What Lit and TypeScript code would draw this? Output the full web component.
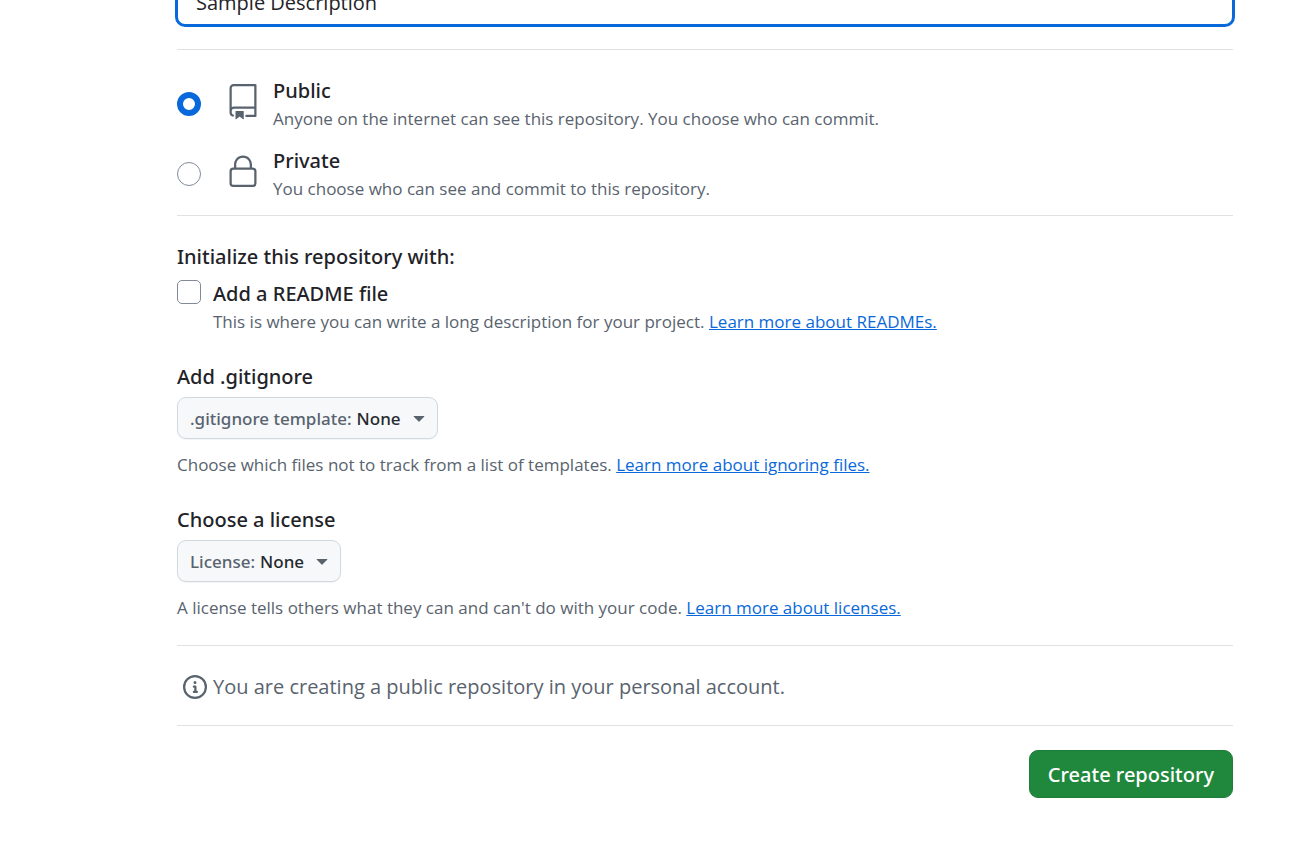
import { LitElement, html, css, svg } from "lit";
import { customElement, state } from "lit/decorators.js";

const repoIcon = svg`<path d="M3 2.75A2.75 2.75 0 0 1 5.75 0h14.5a.75.75 0 0 1 .75.75v20.5a.75.75 0 0 1-.75.75h-6a.75.75 0 0 1 0-1.5h5.25v-4H6A1.5 1.5 0 0 0 4.5 18v.75c0 .716.43 1.334 1.05 1.605a.75.75 0 0 1-.6 1.374A3.251 3.251 0 0 1 3 18.75ZM19.5 1.5H5.75c-.69 0-1.25.56-1.25 1.25v12.651A2.989 2.989 0 0 1 6 15h13.5Z"/><path d="M7 18.25a.25.25 0 0 1 .25-.25h5a.25.25 0 0 1 .25.25v5.01a.25.25 0 0 1-.397.201l-2.206-1.604a.25.25 0 0 0-.294 0L7.397 23.46a.25.25 0 0 1-.397-.2Z"/>`;
const lockIcon = svg`<path d="M6 9V7.25C6 3.845 8.503 1 12 1s6 2.845 6 6.25V9h.5a2.5 2.5 0 0 1 2.5 2.5v8a2.5 2.5 0 0 1-2.5 2.5h-13A2.5 2.5 0 0 1 3 19.5v-8A2.5 2.5 0 0 1 5.5 9Zm-1.5 2.5v8a1 1 0 0 0 1 1h13a1 1 0 0 0 1-1v-8a1 1 0 0 0-1-1h-13a1 1 0 0 0-1 1Zm3-4.25V9h9V7.25c0-2.67-1.922-4.75-4.5-4.75-2.578 0-4.5 2.08-4.5 4.75Z"/>`;
const infoIcon = svg`<path d="M0 8a8 8 0 1 1 16 0A8 8 0 0 1 0 8Zm8-6.5a6.5 6.5 0 1 0 0 13 6.5 6.5 0 0 0 0-13ZM6.5 7.75A.75.75 0 0 1 7.25 7h1a.75.75 0 0 1 .75.75v2.75h.25a.75.75 0 0 1 0 1.5h-2a.75.75 0 0 1 0-1.5h.25v-2h-.25a.75.75 0 0 1-.75-.75ZM8 6a1 1 0 1 1 0-2 1 1 0 0 1 0 2Z"/>`;

const visibilities = [
  { id: "public", title: "Public", icon: repoIcon, note: "Anyone on the internet can see this repository. You choose who can commit." },
  { id: "private", title: "Private", icon: lockIcon, note: "You choose who can see and commit to this repository." },
];

@customElement("app-root")
export class AppRoot extends LitElement {
  @state() private visibility = "public";

  static styles = css`
    :host {
      display: block;
      min-height: 100vh;
      overflow: hidden;
      box-sizing: border-box;
      background: #fff;
      color: #1f2328;
      font: 400 20px/28px "Open Sans", "Noto Sans", sans-serif;
    }
    *, *::before { box-sizing: border-box; }
    .form { margin: -21px 76px 0 177px; padding-bottom: 48px; }
    .description { display: flex; margin: 0 -2px 22px; }
    .description input {
      flex: 1;
      min-width: 0;
      height: 48px;
      padding: 0 18px 2px;
      border: 3px solid #0969da;
      border-radius: 10px;
      outline: none;
      background: #fff;
      color: inherit;
      font: inherit;
    }
    .visibility {
      display: grid;
      gap: 14px;
      margin: 0;
      padding: 27px 0 12px;
      border: solid #dfe2e5;
      border-width: 1px 0;
    }
    .choice { display: flex; align-items: flex-start; }
    .radio, .check {
      appearance: none;
      flex: none;
      width: 24px;
      height: 24px;
      margin: 0;
      border: 1px solid #818b98;
      background: #fff;
    }
    .radio { margin-top: 15px; border-radius: 50%; }
    .radio:checked { border: 6px solid #0969da; }
    .check { border-radius: 5px; }
    .check:checked { background: #0969da; border-color: #0969da; }
    .icon { flex: none; fill: #59636e; }
    .icon.large { width: 36px; height: 36px; margin: 7px 12px 0 24px; }
    .icon.small { width: 24px; height: 24px; }
    .copy { min-width: 0; }
    .title { display: block; margin: 0; font: 500 20px/28px "Noto Sans", "Open Sans", sans-serif; }
    .note { margin: 0; color: #59636e; font-size: 17px; line-height: 28px; }
    .note a { color: #0969da; text-decoration: underline; }
    .section { margin-top: 27px; }
    .readme { display: flex; gap: 12px; margin-top: 9px; }
    .picker {
      position: relative;
      display: inline-flex;
      align-items: center;
      height: 42px;
      margin: 6px 0 12px;
      padding: 2px 12px 0;
      border: 1px solid #d1d9e0;
      border-radius: 9px;
      background: #f6f8fa;
      box-shadow: 0 1px 1px rgba(31, 35, 40, 0.05);
      color: #59636e;
      font: 500 17px/28px "Noto Sans", "Open Sans", sans-serif;
      vertical-align: top;
    }
    .picker select {
      appearance: none;
      field-sizing: content;
      margin: 0 0 0 5px;
      padding: 0 24px 0 0;
      border: 0;
      outline: none;
      background: none;
      color: #25292e;
      font: inherit;
    }
    .caret { position: absolute; right: 12px; width: 12px; height: 6px; fill: #59636e; pointer-events: none; }
    .summary {
      display: flex;
      align-items: center;
      gap: 6px;
      margin-top: 23px;
      padding: 27px 6px 24px;
      border: solid #dfe2e5;
      border-width: 1px 0;
      color: #59636e;
    }
    .summary p { margin: 0; }
    .actions { display: flex; justify-content: flex-end; margin-top: 24px; }
    .create {
      height: 48px;
      padding: 2px 18px 0;
      border: 1px solid #1f7d39;
      border-radius: 9px;
      background: #1f883d;
      color: #fff;
      font: 500 20px/28px "Noto Sans", "Open Sans", sans-serif;
    }
  `;

  private picker(id: string, prefix: string) {
    return html`<label class="picker" for=${id}>
      ${prefix}
      <select id=${id}><option>None</option></select>
      <svg class="caret" viewBox="0 0 12 6" aria-hidden="true"><path d="M1.1 0h9.8a.4.4 0 0 1 .3.7L6.4 5.5a.6.6 0 0 1-.8 0L.8.7A.4.4 0 0 1 1.1 0Z"/></svg>
    </label>`;
  }

  render() {
    return html`<form class="form" @submit=${(e: Event) => e.preventDefault()}>
      <div class="description">
        <input type="text" aria-label="Description" value="Sample Description" />
      </div>
      <fieldset class="visibility">
        ${visibilities.map((v) => html`<div class="choice">
          <input class="radio" type="radio" name="visibility" id=${v.id} aria-describedby="${v.id}-note"
            .checked=${this.visibility === v.id} @change=${() => (this.visibility = v.id)} />
          <svg class="icon large" viewBox="0 0 24 24" aria-hidden="true">${v.icon}</svg>
          <div class="copy">
            <label class="title" for=${v.id}>${v.title}</label>
            <p class="note" id="${v.id}-note">${v.note}</p>
          </div>
        </div>`)}
      </fieldset>
      <section class="section">
        <h2 class="title">Initialize this repository with:</h2>
        <div class="readme">
          <input class="check" type="checkbox" id="readme" />
          <div class="copy">
            <label class="title" for="readme">Add a README file</label>
            <p class="note">This is where you can write a long description for your project. <a href="#readmes">Learn more about READMEs.</a></p>
          </div>
        </div>
      </section>
      <section class="section">
        <h2 class="title">Add .gitignore</h2>
        ${this.picker("gitignore", ".gitignore template:")}
        <p class="note">Choose which files not to track from a list of templates. <a href="#ignoring">Learn more about ignoring files.</a></p>
      </section>
      <section class="section">
        <h2 class="title">Choose a license</h2>
        ${this.picker("license", "License:")}
        <p class="note">A license tells others what they can and can't do with your code. <a href="#licenses">Learn more about licenses.</a></p>
      </section>
      <div class="summary">
        <svg class="icon small" viewBox="0 0 16 16" aria-hidden="true">${infoIcon}</svg>
        <p>You are creating a ${this.visibility} repository in your personal account.</p>
      </div>
      <div class="actions"><button class="create" type="submit">Create repository</button></div>
    </form>`;
  }
}
